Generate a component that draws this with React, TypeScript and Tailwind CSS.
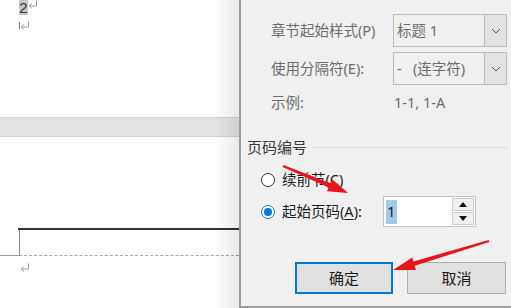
import React from "react";

const font = { fontFamily: '"Noto Sans", "Noto Sans CJK SC", sans-serif' };

function arrowPoints(tx: number, ty: number, hx: number, hy: number, headLen: number, headHalf: number, tailHalf: number, baseHalf: number) {
  const dx = hx - tx;
  const dy = hy - ty;
  const len = Math.hypot(dx, dy);
  const ux = dx / len;
  const uy = dy / len;
  const nx = -uy;
  const ny = ux;
  const bx = hx - ux * headLen;
  const by = hy - uy * headLen;
  const pts: [number, number][] = [
    [tx - nx * tailHalf, ty - ny * tailHalf],
    [bx - nx * baseHalf, by - ny * baseHalf],
    [bx - nx * headHalf, by - ny * headHalf],
    [hx, hy],
    [bx + nx * headHalf, by + ny * headHalf],
    [bx + nx * baseHalf, by + ny * baseHalf],
    [tx + nx * tailHalf, ty + ny * tailHalf],
  ];
  return pts.map((p) => `${p[0].toFixed(1)},${p[1].toFixed(1)}`).join(" ");
}

function Ret({ className = "" }: { className?: string }) {
  return (
    <svg width="10" height="9" viewBox="0 0 10 9" className={className}>
      <path d="M8.5 0.5 V6 H1.5" fill="none" stroke="#9a9a9a" strokeWidth="1" />
      <path d="M3.8 3.5 L1.2 6 L3.8 8.5" fill="none" stroke="#9a9a9a" strokeWidth="1" />
    </svg>
  );
}

function Chevron() {
  return (
    <svg width="10" height="6" viewBox="0 0 10 6">
      <path d="M1 1 L5 5 L9 1" fill="none" stroke="#606060" strokeWidth="1" />
    </svg>
  );
}

function Combo({ text }: { text: string }) {
  return (
    <div className="flex h-[33px] w-[114px] border border-[#bcbcbc] bg-[#f0f0f0]">
      <div className="flex flex-1 items-center whitespace-pre pl-[3px] text-[14.5px] text-[#6d6d6d]">{text}</div>
      <div className="flex w-[22px] items-center justify-center border-l border-[#bcbcbc] bg-[#e3e3e3]">
        <Chevron />
      </div>
    </div>
  );
}

export default function App() {
  return (
    <div className="relative flex h-[308px] w-[511px] overflow-hidden bg-white" style={font}>
      {/* Document area */}
      <div className="relative flex w-[239px] flex-col bg-white">
        <div className="h-[117px] pl-[19px]">
          <div className="flex items-start">
            <span
              className="flex h-[15px] w-[9px] items-center justify-center bg-[#c8c8c8] text-[15px] leading-[15px] text-[#333]"
              style={{ fontFamily: '"Liberation Sans", sans-serif' }}
            >
              2
            </span>
            <Ret />
          </div>
          <div className="mt-[7px] flex items-start">
            <div className="h-[7px] w-px bg-[#777]" />
            <Ret className="-mt-[1px]" />
          </div>
        </div>
        <div className="h-[20px] border-y border-[#d2d2d2] bg-[#e4e4e4]" />
        <div className="flex flex-1 flex-col pt-[91px]">
          <div className="ml-[18px] h-[2px] bg-[#333]" />
          <div className="ml-[19px] h-[25px] w-px bg-[#8a8a8a]" />
          <div className="flex h-px items-center">
            <div className="h-px w-[19px] bg-[#9a9a9a]" />
            <div className="h-px flex-1 border-t border-dashed border-[#a8a8a8]" />
          </div>
          <div className="ml-[20px] mt-[7px]">
            <Ret />
          </div>
        </div>
        <div className="absolute right-0 top-0 h-full w-[24px] bg-gradient-to-r from-[rgba(0,0,0,0)] to-[rgba(0,0,0,0.09)]" />
      </div>

      {/* Dialog */}
      <div className="flex h-[308px] flex-1 flex-col border-b-2 border-l-2 border-[#9c9c9c] bg-[#f0f0f0] pt-[14px]">
        <div className="flex h-[33px] items-center pl-[30px]">
          <div className="w-[122px] text-[14.5px] text-[#6d6d6d]">章节起始样式(P)</div>
          <Combo text="标题 1" />
        </div>
        <div className="mt-[5px] flex h-[33px] items-center pl-[30px]">
          <div className="w-[122px] text-[14.5px] text-[#6d6d6d]">使用分隔符(E):</div>
          <Combo text={"-   (连字符)"} />
        </div>
        <div className="flex h-[35px] items-center pl-[30px]">
          <div className="w-[123px] text-[14.5px] text-[#6d6d6d]">示例:</div>
          <div className="text-[14.5px] text-[#6d6d6d]">1-1, 1-A</div>
        </div>
        <div className="mt-[19px] flex h-[16px] items-center pl-[6px]">
          <div className="text-[15px] text-[#3a3a3a]">页码编号</div>
          <div className="ml-[5px] mr-[4px] h-px flex-1 bg-[#dadada]" />
        </div>
        <div className="mt-[13px] flex h-[24px] items-center pl-[20px]">
          <div className="h-[14px] w-[14px] rounded-full border border-[#333] bg-white" />
          <div className="ml-[7px] text-[14.5px] text-[#1b1b1b]">
            续前节(<span className="underline underline-offset-2">C</span>)
          </div>
        </div>
        <div className="mt-[4px] flex h-[31px] items-center pl-[20px]">
          <div className="flex h-[14px] w-[14px] items-center justify-center rounded-full border border-[#0078d7] bg-white">
            <div className="h-[8px] w-[8px] rounded-full bg-[#0078d7]" />
          </div>
          <div className="ml-[7px] w-[101px] text-[14.5px] text-[#1b1b1b]">
            起始页码(<span className="underline underline-offset-2">A</span>):
          </div>
          <div className="flex h-[31px] w-[93px] border border-[#c4c4c4] bg-white">
            <div className="flex flex-1 items-center pl-[2px]">
              <span className="flex h-[24px] items-center bg-[#9fcbef] px-[1px] text-[15px] text-[#222]">1</span>
            </div>
            <div className="my-px mr-px flex w-[22px] flex-col gap-px">
              <div className="flex flex-1 items-center justify-center border border-[#cfcfcf] bg-[#f0f0f0]">
                <svg width="8" height="5" viewBox="0 0 8 5"><path d="M0 5 L4 0 L8 5 Z" fill="#111" /></svg>
              </div>
              <div className="flex flex-1 items-center justify-center border border-[#cfcfcf] bg-[#f0f0f0]">
                <svg width="8" height="5" viewBox="0 0 8 5"><path d="M0 0 L4 5 L8 0 Z" fill="#111" /></svg>
              </div>
            </div>
          </div>
        </div>
        <div className="mt-[35px] flex pl-[54px]">
          <div className="flex h-[32px] w-[98px] items-center justify-center border-2 border-[#0078d7] bg-[#e1e1e1] text-[15px] text-[#1b1b1b]">确定</div>
          <div className="ml-[14px] flex h-[32px] w-[99px] items-center justify-center border border-[#adadad] bg-[#e1e1e1] text-[15px] text-[#1b1b1b]">取消</div>
        </div>
      </div>

      {/* Red annotation arrows */}
      <svg className="pointer-events-none absolute left-0 top-0" width="511" height="308" viewBox="0 0 511 308">
        <polygon points={arrowPoints(283, 166, 348, 193, 20, 6.5, 1, 2.2)} fill="#e8141b" />
        <polygon points={arrowPoints(489, 241, 393, 270, 22, 6.5, 1.2, 2.2)} fill="#e8141b" />
      </svg>
    </div>
  );
}
